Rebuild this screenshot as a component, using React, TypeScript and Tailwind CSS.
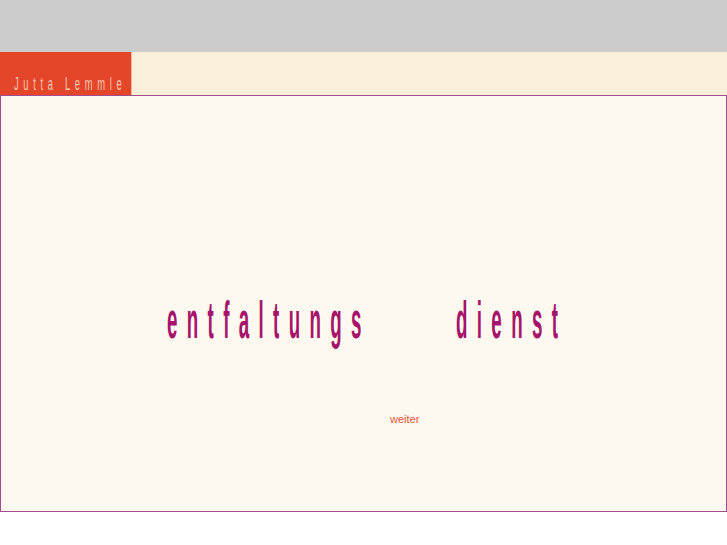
export default function App() {
  return (
    <div className="w-[727px] h-[545px] bg-white overflow-hidden" style={{ fontFamily: '"Liberation Sans", Arial, sans-serif' }}>
      {/* Top grey strip */}
      <div className="h-[52px] bg-[#cccccc]" />

      {/* Header */}
      <div className="flex h-[43px] bg-[#faefd9]">
        <div className="w-[132px] h-full bg-[#e4462a] border-r border-[#f3b49c] pl-[14px] pt-[21px]">
          <span className="inline-block origin-left scale-x-[0.52] whitespace-nowrap text-[18px] leading-none tracking-[9px] text-[#f8c8b2]">
            Jutta Lemmle
          </span>
        </div>
      </div>

      {/* Content frame */}
      <div className="h-[417px] border border-[#a44b92] bg-[#fdf9f0]">
        <div className="flex pl-[166px] pt-[198px]">
          <div className="w-[289px]">
            <span className="inline-block origin-left scale-x-[0.36] whitespace-nowrap text-[52px] font-bold leading-none tracking-[26px] text-[#a5146a]">
              entfaltungs
            </span>
          </div>
          <div>
            <span className="inline-block origin-left scale-x-[0.36] whitespace-nowrap text-[52px] font-bold leading-none tracking-[26px] text-[#a5146a]">
              dienst
            </span>
          </div>
        </div>

        <div className="pl-[389px] pt-[60px]">
          <a className="text-[11px] leading-none text-[#e3573b]">weiter</a>
        </div>
      </div>
    </div>
  );
}
